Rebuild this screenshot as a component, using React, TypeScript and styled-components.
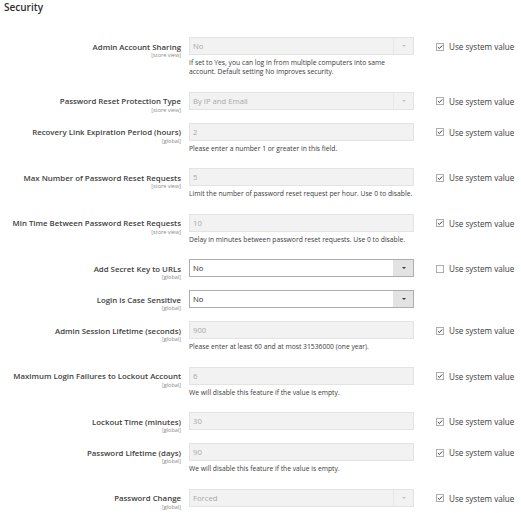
import React from 'react';
import styled, { createGlobalStyle } from 'styled-components';

const GlobalStyle = createGlobalStyle`
  body {
    margin: 0;
    background: #ffffff;
    font-family: 'Open Sans', 'Noto Sans', sans-serif;
    color: #303030;
  }
`;

// Styled components
const Page = styled.div`
  width: 521px;
  height: 513px;
  overflow: hidden;
`;

const SectionTitle = styled.h2`
  margin: 0;
  padding-left: 4px;
  font-size: 10px;
  line-height: 14px;
  font-weight: 600;
  color: #303030;
`;

const Fields = styled.div`
  display: flex;
  flex-direction: column;
  gap: 13px;
  margin-top: 23px;
`;

const Row = styled.div`
  display: grid;
  grid-template-columns: 189px 225px 1fr;
  align-items: start;
`;

const LabelCell = styled.div`
  padding: 5.5px 8px 0 0;
  text-align: right;
  height: 18px;
  box-sizing: border-box;
`;

const LabelText = styled.div`
  font-size: 7.85px;
  line-height: 8px;
  font-weight: 600;
  color: #414141;
  white-space: nowrap;
`;

const Scope = styled.div`
  margin-top: 1.5px;
  font-size: 5.5px;
  line-height: 6px;
  color: #8a8a8a;
  white-space: nowrap;
`;

const Control = styled.div`
  display: flex;
  flex-direction: column;
`;

const Box = styled.div<{ $disabled: boolean }>`
  display: flex;
  align-items: center;
  height: 18px;
  box-sizing: border-box;
  border: 1px solid ${(p) => (p.$disabled ? '#e3e3e3' : '#adadad')};
  background: ${(p) => (p.$disabled ? '#f2f2f2' : '#ffffff')};
  color: ${(p) => (p.$disabled ? '#a8a8a8' : '#303030')};
  font-size: 7.7px;
  padding-left: 3px;
`;

const BoxValue = styled.span`
  flex: 1;
  white-space: nowrap;
`;

const ArrowBox = styled.span<{ $disabled: boolean }>`
  display: flex;
  align-items: center;
  justify-content: center;
  width: 19px;
  height: 100%;
  background: ${(p) => (p.$disabled ? '#f2f2f2' : '#e3e3e3')};
  border-left: 1px solid ${(p) => (p.$disabled ? '#e8e8e8' : '#e3e3e3')};
`;

const Arrow = styled.span<{ $disabled: boolean }>`
  width: 0;
  height: 0;
  border-left: 2px solid transparent;
  border-right: 2px solid transparent;
  border-top: 2.5px solid ${(p) => (p.$disabled ? '#c4c4c4' : '#41362f')};
`;

const Note = styled.div`
  margin: 3px 0 2.5px;
  font-size: 6.75px;
  line-height: 9px;
  color: #3a3a3a;
  white-space: pre-line;
`;

const UseDefault = styled.label`
  display: flex;
  align-items: center;
  gap: 5px;
  height: 18px;
  padding-left: 22px;
  padding-top: 1px;
  box-sizing: border-box;
  font-size: 8.1px;
  color: #3a3a3a;
  white-space: nowrap;
`;

const CheckBox = styled.span`
  display: flex;
  align-items: center;
  justify-content: center;
  width: 8px;
  height: 8px;
  border: 1px solid #adadad;
  background: #ffffff;
  box-sizing: border-box;
`;

// Types
type Field = {
  label: string;
  scope: string;
  value: string;
  select?: boolean;
  enabled?: boolean;
  note?: string;
  system?: 'checked' | 'unchecked' | 'none';
};

const fields: Field[] = [
  {
    label: 'Admin Account Sharing',
    scope: '[store view]',
    value: 'No',
    select: true,
    note: 'If set to Yes, you can log in from multiple computers into same\naccount. Default setting No improves security.',
  },
  { label: 'Password Reset Protection Type', scope: '[store view]', value: 'By IP and Email', select: true },
  {
    label: 'Recovery Link Expiration Period (hours)',
    scope: '[global]',
    value: '2',
    note: 'Please enter a number 1 or greater in this field.',
  },
  {
    label: 'Max Number of Password Reset Requests',
    scope: '[store view]',
    value: '5',
    note: 'Limit the number of password reset request per hour. Use 0 to disable.',
  },
  {
    label: 'Min Time Between Password Reset Requests',
    scope: '[store view]',
    value: '10',
    note: 'Delay in minutes between password reset requests. Use 0 to disable.',
  },
  { label: 'Add Secret Key to URLs', scope: '[global]', value: 'No', select: true, enabled: true, system: 'unchecked' },
  { label: 'Login is Case Sensitive', scope: '[global]', value: 'No', select: true, enabled: true, system: 'none' },
  {
    label: 'Admin Session Lifetime (seconds)',
    scope: '[global]',
    value: '900',
    note: 'Please enter at least 60 and at most 31536000 (one year).',
  },
  {
    label: 'Maximum Login Failures to Lockout Account',
    scope: '[global]',
    value: '6',
    note: 'We will disable this feature if the value is empty.',
  },
  { label: 'Lockout Time (minutes)', scope: '[global]', value: '30' },
  {
    label: 'Password Lifetime (days)',
    scope: '[global]',
    value: '90',
    note: 'We will disable this feature if the value is empty.',
  },
  { label: 'Password Change', scope: '[global]', value: 'Forced', select: true },
];

const CheckMark = () => (
  <svg width="6" height="6" viewBox="0 0 10 10">
    <path d="M1.5 5.2 L4 7.6 L8.6 2.4" fill="none" stroke="#41362f" strokeWidth="1.6" />
  </svg>
);

const FieldRow = ({ field }: { field: Field }) => {
  const disabled = !field.enabled;
  const system = field.system ?? 'checked';
  return (
    <Row>
      <LabelCell>
        <LabelText>{field.label}</LabelText>
        <Scope>{field.scope}</Scope>
      </LabelCell>
      <Control>
        <Box $disabled={disabled}>
          <BoxValue>{field.value}</BoxValue>
          {field.select && (
            <ArrowBox $disabled={disabled}>
              <Arrow $disabled={disabled} />
            </ArrowBox>
          )}
        </Box>
        {field.note && <Note>{field.note}</Note>}
      </Control>
      {system !== 'none' && (
        <UseDefault>
          <CheckBox>{system === 'checked' && <CheckMark />}</CheckBox>
          Use system value
        </UseDefault>
      )}
    </Row>
  );
};

export default function App() {
  return (
    <Page>
      <GlobalStyle />
      <SectionTitle>Security</SectionTitle>
      <Fields>
        {fields.map((f) => (
          <FieldRow key={f.label} field={f} />
        ))}
      </Fields>
    </Page>
  );
}
